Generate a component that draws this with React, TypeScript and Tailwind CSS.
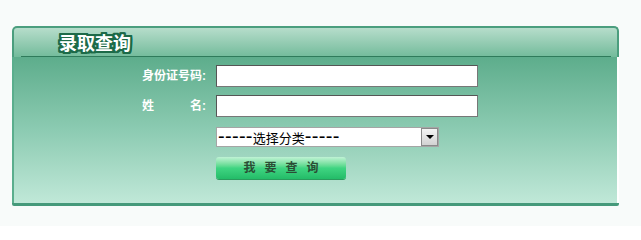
import React from "react";

export default function App() {
  const cjk = { fontFamily: '"Liberation Sans", "Noto Sans CJK SC", sans-serif' };
  const c = "#1c6a48";
  const shadow = [
    [1, 0], [-1, 0], [0, 1], [0, -1], [1, 1], [-1, -1], [1, -1], [-1, 1],
    [2, 0], [-2, 0], [0, 2], [0, -2], [2, 1], [-2, 1], [2, -1], [-2, -1],
    [1, 2], [-1, 2], [1, -2], [-1, -2], [2, 2], [-2, -2], [2, -2], [-2, 2],
  ]
    .map(([x, y]) => `${x}px ${y}px 0 ${c}`)
    .join(", ");
  return (
    <div className="w-[641px] h-[226px] bg-[#f8fbfa] pt-[26px] pl-[12px]" style={cjk}>
      <div className="w-[607px] h-[180px] flex flex-col">
        {/* header */}
        <div className="h-[31px] rounded-t-[5px] border-t-2 border-x-2 border-[#4b9e7e] bg-gradient-to-b from-[#b6ddcb] to-[#72bb9b] flex flex-col">
          <div className="flex-1 flex items-center pl-[45px] pt-[3px]">
            <span
              className="text-[18px] leading-none font-bold text-white"
              style={{ textShadow: shadow }}
            >
              录取查询
            </span>
          </div>
          <div className="h-[1px] ml-[7px] mr-[6px] bg-[#2f7b5b]" />
        </div>
        {/* body */}
        <div className="flex-1 border-x-2 border-[#5aae8d] border-r-white bg-gradient-to-b from-[#5dad8c] via-[#8ccbb2] to-[#c0e8d8] pt-[8px] pl-[128px]">
          <div className="flex items-center h-[22px]">
            <div className="w-[74px] text-[12px] font-bold text-white leading-none">身份证号码:</div>
            <div className="w-[262px] h-[22px] bg-white border border-[#555] border-b-[#777] border-r-[#777]" />
          </div>
          <div className="flex items-center h-[22px] mt-[8px]">
            <div className="w-[74px] text-[12px] font-bold text-white leading-none flex">
              <span>姓</span>
              <span className="ml-[36px]">名:</span>
            </div>
            <div className="w-[262px] h-[22px] bg-white border border-[#555] border-b-[#777] border-r-[#777]" />
          </div>
          <div className="flex items-center mt-[10px] ml-[74px]">
            <div className="w-[223px] h-[20px] bg-white border border-[#a5a5a5] flex items-center">
              <span className="flex-1 pl-[1px] pb-[2px] text-[13px] leading-none text-black flex items-baseline">
                <span className="text-[20px] leading-none tracking-[0.3px]">-----</span>
                <span>选择分类</span>
                <span className="text-[20px] leading-none tracking-[0.3px]">-----</span>
              </span>
              <div className="w-[17px] h-[18px] border border-[#8a8a8a] bg-gradient-to-b from-[#f4f4f4] to-[#d2d2d2] flex items-center justify-center">
                <div className="w-0 h-0 border-l-[4px] border-r-[4px] border-t-[4px] border-l-transparent border-r-transparent border-t-black" />
              </div>
            </div>
          </div>
          <div className="mt-[10px] ml-[74px] w-[130px] h-[22px] rounded-[3px] bg-gradient-to-b from-[#bff2d5] via-[#3fd582] to-[#23bc68] flex items-center justify-center shadow-[0_1px_0_#2a9a5c]">
            <span className="text-[12px] font-bold text-[#2b4d35] tracking-[9px] pl-[9px] leading-none">我要查询</span>
          </div>
        </div>
        <div className="h-[3px] bg-[#45997a] rounded-b-[2px]" />
      </div>
    </div>
  );
}
